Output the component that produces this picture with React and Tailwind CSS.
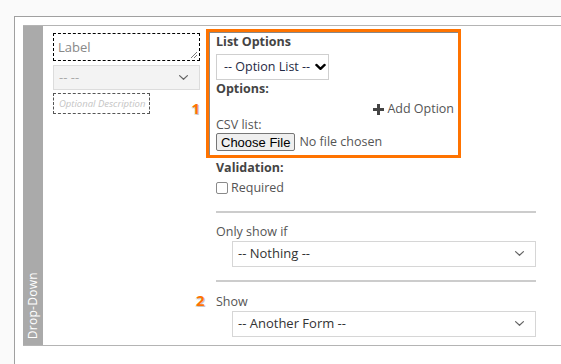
const FONT = { fontFamily: '"Open Sans", "Liberation Sans", sans-serif' };

function Chevron({ bold = false, className = "" }) {
  return (
    <svg
      width={bold ? 11 : 11}
      height={bold ? 8 : 7}
      viewBox="0 0 12 8"
      className={className}
      fill="none"
      stroke="currentColor"
      strokeWidth={bold ? 2.6 : 1.4}
      strokeLinecap="round"
      strokeLinejoin="round"
    >
      <path d="M1.5 1.8 L6 6 L10.5 1.8" />
    </svg>
  );
}

function FakeSelect({ value, className = "" }) {
  return (
    <div
      className={`flex items-center justify-between h-[26px] border border-[#d6d6d6] bg-white pl-[5px] pr-[10px] text-[13px] text-[#333] ${className}`}
    >
      <span>{value}</span>
      <Chevron className="text-[#666]" />
    </div>
  );
}

function Marker({ n }) {
  return (
    <span
      className="font-bold text-[15px] leading-none text-[#ff7300]"
      style={{ textShadow: "1px 1px 0 #c8c8c8, -1px 1px 0 #e0e0e0" }}
    >
      {n}
    </span>
  );
}

export default function App() {
  return (
    <div className="w-[561px] h-[364px] bg-[#fafafa] pt-4 pl-[14px] overflow-hidden" style={FONT}>
      <div className="h-full bg-white border-l border-t border-[#a0a0a0] pt-2 pl-2">
        <div className="flex h-[321px] border-t border-b border-[#b4b4b4]">
          {/* Side tab */}
          <div className="w-5 bg-[#aaaaaa] flex flex-col items-center justify-end pb-[6px]">
            <span className="text-white text-[12px] leading-none [writing-mode:vertical-rl] rotate-180 tracking-[0.3px]">
              Drop-Down
            </span>
          </div>

          {/* Left: field preview */}
          <div className="w-[157px] pl-[10px] flex flex-col">
            <div className="relative mt-[7px] h-[28px] w-[147px] border border-dashed border-black px-[4px] text-[13px] leading-[26px] text-[#888]">
              Label
              <svg width="8" height="8" viewBox="0 0 8 8" className="absolute right-[1px] bottom-[1px]" stroke="#777" strokeWidth="1">
                <path d="M7 1 L1 7 M7 4 L4 7" />
              </svg>
            </div>
            <div className="mt-[4px] h-[25px] w-[147px] border border-[#dcdcdc] bg-[#f3f3f3] flex items-center justify-between pl-[5px] pr-[10px] text-[13px] text-[#aaa]">
              <span>-- --</span>
              <Chevron className="text-[#666]" />
            </div>
            <div className="mt-[3px] flex items-start justify-between w-[147px]">
              <div className="h-[21px] w-[97px] border border-dashed border-[#555] pl-[5px] text-[9.5px] leading-[19px] italic text-[#c4c4c4] whitespace-nowrap overflow-hidden">
                Optional Description
              </div>
              <div className="mt-[3px]">
                <Marker n="1" />
              </div>
            </div>
          </div>

          {/* Right: options */}
          <div className="w-[330px] ml-[6px] flex flex-col text-[12.5px] text-[#555]">
            <div className="mt-[3px] w-[255px] border-[3px] border-[#ff7300] px-[7px] pt-[1px] pb-[3px] shadow-[inset_1px_1px_0_#888]">
              <div className="font-bold text-[#444] leading-[18px]">List Options</div>
              <div className="mt-[3px] h-[26px] w-[113px] border border-[#cfcfcf] bg-white flex items-center gap-[5px] pl-[7px] text-[12.5px] text-[#1f2a44] whitespace-nowrap">
                <span>-- Option List --</span>
                <Chevron bold className="text-black shrink-0" />
              </div>
              <div className="font-bold text-[#444] leading-[18px]">Options:</div>
              <div className="mt-[3px] -mr-[3px] flex justify-end items-center gap-[3px] leading-[16px]">
                <svg width="11" height="11" viewBox="0 0 11 11" fill="#444">
                  <rect x="4" y="0" width="3" height="11" />
                  <rect x="0" y="4" width="11" height="3" />
                </svg>
                <span>Add Option</span>
              </div>
              <div className="leading-[16px]">CSV list:</div>
              <div className="flex items-center gap-[4px]">
                <button
                  className="h-[18px] px-[4px] border border-[#767676] rounded-[2px] bg-[#efefef] text-[13px] leading-none text-black"
                  style={{ fontFamily: '"Liberation Sans", Arial, sans-serif' }}
                >
                  Choose File
                </button>
                <span>No file chosen</span>
              </div>
            </div>

            <div className="pl-[10px] pr-0">
              <div className="mt-[1px] font-bold text-[#444] leading-[18px]">Validation:</div>
              <div className="mt-[2px] flex items-center gap-[3px] leading-[18px]">
                <span className="w-[12px] h-[12px] border border-[#8a8a8a] rounded-[2px] bg-white" />
                <span>Required</span>
              </div>
              <div className="mt-[14px] h-[2px] w-[320px] bg-[#cccccc]" />
              <div className="mt-[10px] leading-[18px]">Only show if</div>
              <FakeSelect value="-- Nothing --" className="ml-4 w-[304px]" />
              <div className="mt-[13px] h-[2px] w-[320px] bg-[#cccccc]" />
              <div className="mt-[11px] flex items-center leading-[18px]">
                <span className="-ml-[20px] w-[20px]">
                  <Marker n="2" />
                </span>
                <span>Show</span>
              </div>
              <FakeSelect value="-- Another Form --" className="ml-4 w-[304px]" />
            </div>
          </div>
        </div>
      </div>
    </div>
  );
}
